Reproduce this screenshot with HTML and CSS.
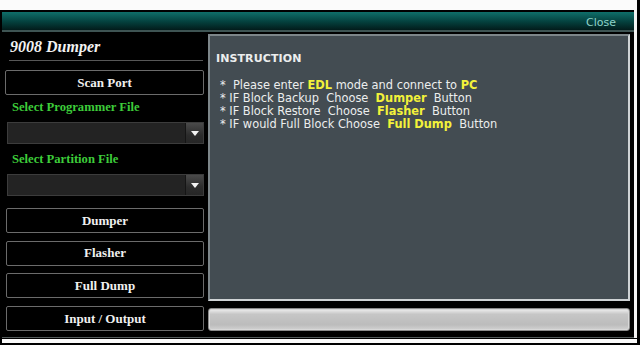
FILE: index.html
```html
<!DOCTYPE html>
<html>
<head>
<meta charset="utf-8">
<link rel="stylesheet" href="styles.css">
</head>
<body>
<div class="page">
  <div class="strip-top"></div>
  <div class="row">
    <div class="window">
      <div class="header"><span class="close">Close</span></div>
      <div class="body">
        <div class="left">
          <div class="title">9008 Dumper</div>
          <div class="sep"></div>
          <div class="btn scan">Scan Port</div>
          <div class="label l1">Select Programmer File</div>
          <div class="select"><span class="arrow"><svg width="8" height="5" viewBox="0 0 8 5"><path d="M0 0H8L4 5Z" fill="#f4f4f4"/></svg></span></div>
          <div class="label l2">Select Partition File</div>
          <div class="select"><span class="arrow"><svg width="8" height="5" viewBox="0 0 8 5"><path d="M0 0H8L4 5Z" fill="#f4f4f4"/></svg></span></div>
          <div class="btn b1">Dumper</div>
          <div class="btn b2">Flasher</div>
          <div class="btn b2">Full Dump</div>
          <div class="btn b2">Input / Output</div>
        </div>
        <div class="right">
          <div class="panel">
            <div class="heading">INSTRUCTION</div>
            <div class="lines">
<div class="line">*  Please enter <b>EDL</b> mode and connect to <b>PC</b></div>
<div class="line">* IF Block Backup  Choose  <b>Dumper</b>  Button</div>
<div class="line">* IF Block Restore  Choose  <b>Flasher</b>  Button</div>
<div class="line">* IF would Full Block Choose  <b>Full Dump</b>  Button</div>
            </div>
          </div>
          <div class="bar"></div>
        </div>
      </div>
    </div>
    <div class="strip-right"></div>
  </div>
  <div class="strip-bottom"></div>
</div>
</body>
</html>
```
FILE: styles.css
```css
* { box-sizing: border-box; }
html, body { margin: 0; padding: 0; background: #000; }
.page { width: 640px; height: 345px; background: #000; overflow: hidden; }
.strip-top { height: 10px; background: #fbfbfb; margin-right: 3px; }
.row { display: flex; height: 328px; }
.window {
  width: 632px; margin-left: 2px; height: 328px;
  border-top: 2px solid #000;
  border-bottom: 1px solid #555c5c;
  display: flex; flex-direction: column;
  background: #000;
}
.strip-right { width: 3px; background: #f4f4f4; }
.strip-bottom { height: 4px; margin-top: 1px; background: #fafafa; margin-left: 2px; margin-right: 3px; }
.header {
  height: 20px;
  background: linear-gradient(#0f6f6a, #04403d 55%, #021c1b);
  border-bottom: 2px solid #3e5453;
  display: flex; justify-content: flex-end; align-items: center;
  padding-right: 18px;
}
.close { font-family: "DejaVu Sans", Verdana, sans-serif; font-size: 11px; color: #8fd3c8; padding-top: 2px; }
.body { flex: 1; display: flex; }
.left { width: 206px; padding: 0 4px 0 4px; display: flex; flex-direction: column; }
.title {
  height: 28px; padding-left: 4px; padding-top: 6px;
  font-family: "Liberation Serif", "Times New Roman", serif;
  font-weight: bold; font-style: italic; font-size: 16px; color: #f2f2f2;
}
.sep { height: 1px; background: #575757; margin: 0 1px 0 3px; }
.btn {
  height: 25px; border: 1px solid #6b6b6b; border-radius: 2px; background: #000;
  color: #f0f0f0; font-family: "Liberation Serif", "Times New Roman", serif;
  font-weight: bold; font-size: 13px;
  display: flex; align-items: center; justify-content: center;
}
.scan { margin-top: 9px; margin-left: -1px; }
.b1 { margin-top: 12px; }
.b2 { margin-top: 7.7px; }
.label {
  font-family: "Liberation Serif", "Times New Roman", serif;
  font-weight: bold; font-size: 12.6px; color: #3dcc3a;
  padding-left: 6px;
}
.l1 { height: 27px; padding-top: 5px; }
.l2 { height: 30px; padding-top: 8px; }
.select {
  height: 22px; margin-left: 1px; background: #232323; border: 1px solid #3c3c3c;
  display: flex; justify-content: flex-end;
}
.arrow {
  width: 18px; height: 20px; border-left: 1px solid #151515;
  background: linear-gradient(#4a4a4a, #2c2c2c 60%, #262626);
  display: flex; align-items: center; justify-content: center;
}
.right { width: 422px; padding-top: 2px; display: flex; flex-direction: column; }
.panel {
  height: 267px; background: #434c52;
  border: 2px solid #cfd3d5; border-top-color: #7d868a; border-left-color: #7d868a;
  padding: 16px 0 0 6px;
  font-family: "DejaVu Sans", Verdana, Tahoma, sans-serif; color: #eceeee;
}
.heading { font-weight: bold; font-size: 11px; letter-spacing: 0.1px; }
.lines { margin-top: 14px; padding-left: 4px; }
.line { white-space: pre; font-size: 11.4px; line-height: 13px; }
.line b { color: #f3f23a; }
.bar {
  margin-top: 7px; height: 23px; border-radius: 3px;
  border: 1px solid #8a8a8a;
  background: linear-gradient(#f0f0f0, #c6c6c6 25%, #bcbcbc 75%, #d2d2d2);
  box-shadow: inset 0 0 0 1px #d8d8d8;
}
```
